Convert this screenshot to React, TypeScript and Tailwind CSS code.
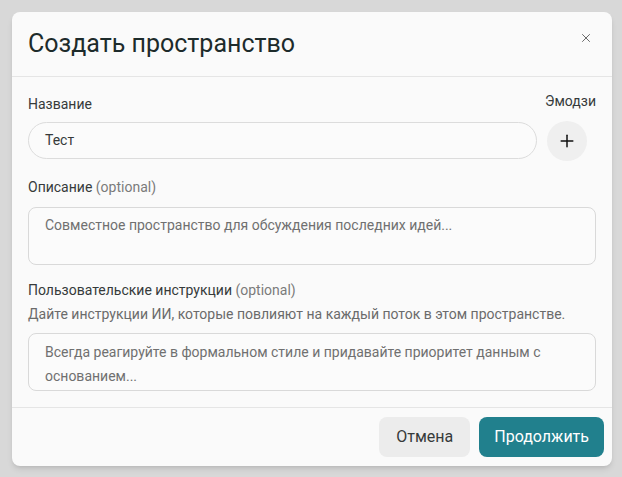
import { Plus, X } from "lucide-react"

export default function App() {
    const labelClass = "text-[14px] leading-[20px] text-[#363a3a]"
    const optionalClass = "text-[#7a7a7a]"

    return (
        <div
            className="h-[477px] w-[622px] bg-[#d8d8d8] p-3"
            style={{ fontFamily: "Roboto, 'Liberation Sans', sans-serif" }}
        >
            <div className="flex h-[454px] w-[600px] flex-col rounded-lg bg-[#fafafa] shadow-md">
                <div className="flex h-[65px] items-center justify-between border-b border-[#e5e5e5] pl-4 pr-[19px]">
                    <h2 className="text-[25px] text-[#1d2b2b]">Создать пространство</h2>
                    <button type="button" className="mb-3 text-[#555]">
                        <X size={14} strokeWidth={1.5} />
                    </button>
                </div>

                <div className="flex flex-1 flex-col px-4 pt-[14px]">
                    <div className="flex items-end gap-2">
                        <div className="flex flex-1 flex-col">
                            <label className={`${labelClass} mb-[8px]`}>Название</label>
                            <div className="mb-[2px] flex h-[37px] items-center rounded-full border border-[#dcdcdc] bg-[#fbfbfb] px-4 text-[14px] text-[#363a3a]">
                                Тест
                            </div>
                        </div>
                        <div className="flex flex-col items-start">
                            <span className={`${labelClass} mb-[10px]`}>Эмодзи</span>
                            <button
                                type="button"
                                className="ml-[2px] flex h-[40px] w-[40px] items-center justify-center rounded-full bg-[#efefef] text-[#111]"
                            >
                                <Plus size={20} strokeWidth={1.8} />
                            </button>
                        </div>
                    </div>

                    <label className={`${labelClass} mt-[16px]`}>
                        Описание <span className={optionalClass}>(optional)</span>
                    </label>
                    <div className="mt-[10px] h-[58px] rounded-lg border border-[#d9d9d9] bg-[#fbfbfb] px-4 pt-[7px] text-[14px] leading-[20px] text-[#707070]">
                        Совместное пространство для обсуждения последних идей...
                    </div>

                    <label className={`${labelClass} mt-[15px]`}>
                        Пользовательские инструкции <span className={optionalClass}>(optional)</span>
                    </label>
                    <p className="mt-[4px] text-[14px] leading-[20px] text-[#6b6b6b]">
                        Дайте инструкции ИИ, которые повлияют на каждый поток в этом пространстве.
                    </p>
                    <div className="mt-[9px] h-[58px] rounded-lg border border-[#d9d9d9] bg-[#fbfbfb] px-4 pt-[6px] text-[14px] leading-[24px] text-[#707070]">
                        Всегда реагируйте в формальном стиле и придавайте приоритет данным с основанием...
                    </div>
                </div>

                <div className="flex h-[59px] items-center justify-end gap-[9px] border-t border-[#e5e5e5] pr-2">
                    <button type="button" className="h-[40px] rounded-lg bg-[#ececec] px-[17px] text-[16px] text-[#363a3a]">
                        Отмена
                    </button>
                    <button type="button" className="h-[40px] rounded-lg bg-[#21808d] px-[15px] text-[16px] text-white">
                        Продолжить
                    </button>
                </div>
            </div>
        </div>
    )
}
